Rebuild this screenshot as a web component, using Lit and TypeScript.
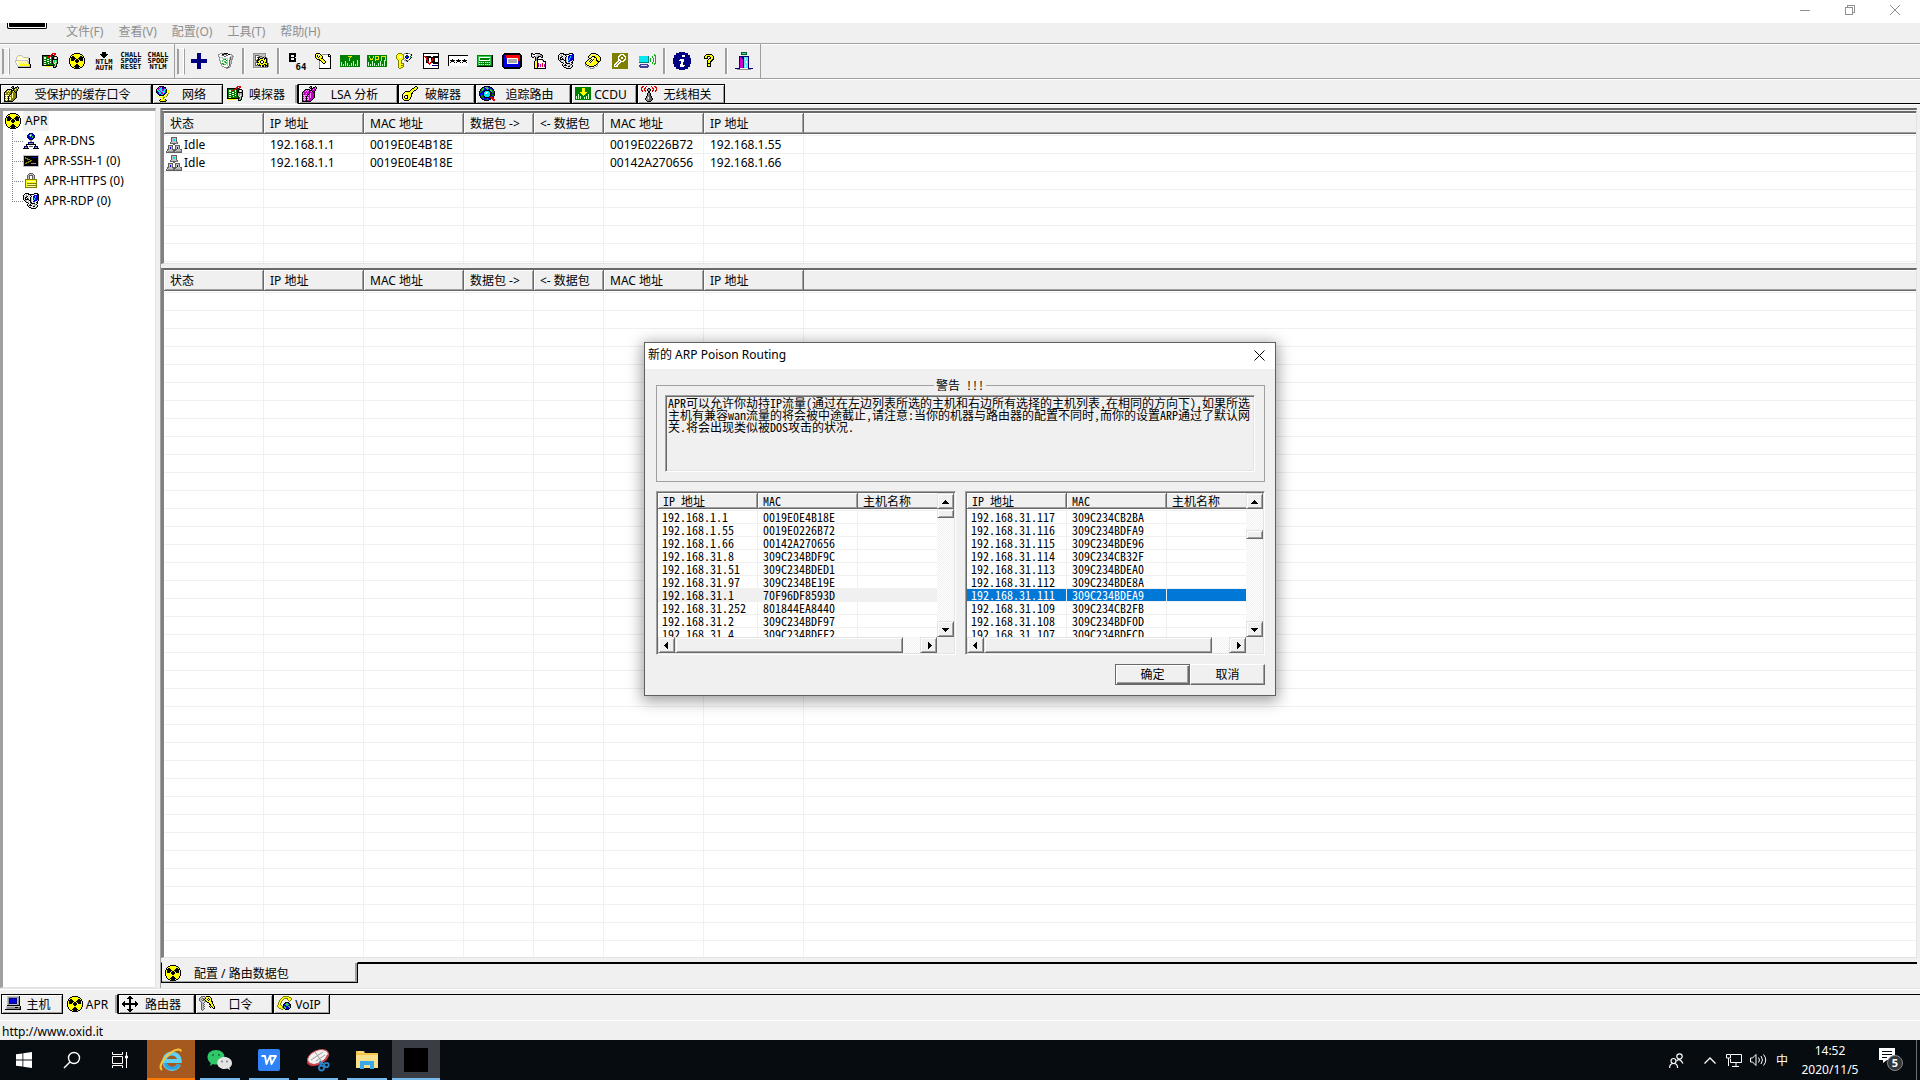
import { LitElement, html, css, svg, nothing } from "lit";
import { customElement, property } from "lit/decorators.js";
import { classMap } from "lit/directives/class-map.js";

/* ---------- icons ---------- */

const PALETTE: Record<string, string> = {
  k: "#000", w: "#fff", y: "#ffff00", Y: "#ffffa0", o: "#808000", g: "#008000", G: "#30d050", s: "#c0c0c0",
  d: "#606060", D: "#909090", b: "#0000e0", n: "#000080", c: "#00e8f0", r: "#e00000", m: "#c000c0", p: "#ff90ff",
};

/* Turns rows of palette letters into one-pixel-high runs. */
const pixels = (rows: string[]) => {
  const runs: unknown[] = [];
  rows.forEach((row, y) => {
    for (const m of row.matchAll(/([a-zA-Z])\1*/g)) {
      runs.push(svg`<rect x=${m.index} y=${y} width=${m[0].length} height="1" fill=${PALETTE[m[1]]}/>`);
    }
  });
  return runs;
};

const radiation = pixels([
  ".....kkkkkk.....",
  "...kkyyyyyykk...",
  "..kyyyyyyyyyyk..",
  ".kykkyyyyyykkyk.",
  ".kkkkkyyyykkkkk.",
  "kykkkkkyykkkkkyk",
  "kykkkkykkykkkkyk",
  "kykkkykkkkykkkyk",
  "kyyyyykkkkyyyyyk",
  "kyyyyyykkyyyyyyk",
  "kyyyyyyyyyyyyyyk",
  ".kyyyyykkyyyyyk.",
  ".kyyyykkkkyyyyk.",
  "..kyykkkkkkyyk..",
  "...kkykkkkykk...",
  ".....kkkkkk.....",
]);

const nic = pixels([
  "..........rrrr..",
  ".........rr.rr..",
  "kkkkkkkkrrkkr...",
  "kgggggrrrkgkkkk.",
  "kgwwgrrgwgkkswsk",
  "kgwwggggwgkkswsk",
  "kggggwwgggkkkkkk",
  "kgwwggggwgksGsGk",
  "kggggwwgggksGsGk",
  "kgwwggggwgksGwsk",
  "kgggggwgggkgwsgk",
  "kgwwgggggggkgsk.",
  "kkkkkkkkkkkkgsk.",
  ".y.yyyyyy..ksgk.",
  "...........kkk..",
  "................",
]);

const vaultRows = [
  "........kk...k..",
  ".......kDk.kkDk.",
  "........kkkooYk.",
  "...kkkkk.koYok..",
  "..koYoYkkkoook..",
  ".koYoYokoYkok...",
  "kooooookoookk...",
  "kYooYookYoook...",
  "koooookoYoook...",
  "kYYYYkYoYoook...",
  "koYokoooYoook...",
  "kYYYkYYoYoook...",
  "koYokoYooook....",
  "kYYYkYYoook.....",
  "koYokooook......",
  "kkkkkkkkk.......",
];
const vault = (main: string, light: string) => pixels(vaultRows.map((r) => r.replace(/o/g, main).replace(/Y/g, light)));

const bars = (label: unknown) => svg`
  <path d="M0 2h20v12H0z" fill="#008000"/>
  <path d="M1.500 13V9M3.500 13v-2M5.500 13V8M7.500 13v-3M9.500 13v-1M11.500 13v-3M13.500 13V8M15.500 13v-2M17.500 13V7" stroke="#c8ffc8"/>
  ${label}`;

const caption = (lines: string[], top: number) => svg`
  ${lines.map((t, i) => svg`<text x="10" y="${top + i * 6}" text-anchor="middle" class="tiny">${t}</text>`)}`;

const rdp = pixels([
  "..kkkk.....kkkk.",
  ".kwswkkkkkkswwbk",
  "kwsDwswkswwbbbbk",
  "kswdkwswkwbbcbbk",
  "kwkkwswkswbbcbbk",
  "ksk.kswkswbcbbbk",
  "kwkkkkwkswbcbbbk",
  ".kDswskkswcbbbsk",
  "..kswswkswbbswk.",
  "...kkswkkwsswkk.",
  ".....kwskkkkwsk.",
  "....kwskwswsDk..",
  "....kskkkwsDswk.",
  ".....kwswskkwsk.",
  "......kkswswsk..",
  "........kkkkk...",
]);

const ICONS: Record<string, { w?: number; art: unknown }> = {
  folder: { art: pixels([
    "................",
    "................",
    "...ssss.........",
    "..sYYYYs........",
    ".sYwYwYwssssss..",
    ".sYYYYYYYYYYYsk.",
    ".swwwwwwwwwwwsk.",
    "ssssssssssssswk.",
    "sYwYwYwYwYwYssk.",
    "swYYyYyYyYyYysk.",
    ".swYyYyYyYyYysk.",
    ".sYYYyYyYyYyYysk",
    "..swYyYyYyYyYysk",
    "..sssssssssssssk",
    "...kkkkkkkkkkkkk",
    "................",
  ]) },
  nic: { art: nic },
  apr: { art: radiation },
  ntlm: { w: 20, art: svg`<path d="M8-1h4v2h2v1h-1v1h-1v1h-1v1h-2v-1h-1v-1h-1v-1h-1v-1h2z" fill="#000"/>${caption(["NTLM", "AUTH"], 11)}` },
  reset: { w: 20, art: caption(["CHALL", "SPOOF", "RESET"], 4) },
  chntlm: { w: 20, art: caption(["CHALL", "SPOOF", "NTLM"], 4) },
  plus: { art: svg`<path d="M6 0h4v6h6v4h-6v6H6v-6H0V6h6z" fill="#000080"/>` },
  bin: { art: pixels([
    "..DDDDkkkk......",
    "DDwwkkdddwkkDD..",
    "DwwsddwwddwwwsD.",
    "DswwwwddwwwwssDD",
    ".DssswwwwwwsdsD.",
    ".DwwsssssswsdsD.",
    ".DwwwGGgwswsdDD.",
    ".DswGswwgswdsD..",
    "..DwGwGGwswdsD..",
    "..DwwwsgGswdsD..",
    "..DsgGwwGswdsD..",
    "...DsgGGwswdD...",
    "...DwwwwwswdD...",
    "....DDwwwwdsD...",
    "......DDDddD....",
    "........DD......",
  ]) },
  config: { art: pixels([
    "DDDDDDDDDDDDD...",
    "DsssssssssssDw..",
    "DsddddssssssDw..",
    "DsdwwsdddssDDw..",
    "DsdwdkkssdkskDw.",
    "DsdwwkykkkykkkDw",
    "DsdwdkkyyyykykDw",
    "DsddkkyykkyyykDw",
    "DssdkyykwwkyykDw",
    "DsddkkykwwkykkDw",
    "DsdwsyyykkyyyykD",
    "DsdwkykyyyykkykD",
    "DsddDkkkykkykkkD",
    "DssssssdykkskDkD",
    "DDDDDDDDDDDDDDDw",
    ".wwwwwwwwwwwwww.",
  ]) },
  b64: { w: 20, art: svg`<path d="M3 0h7v4H9v1h1v4H3zM5 2v2h3V2zM5 5v2h3V5z" fill="#000" fill-rule="evenodd"/><text x="15" y="17" text-anchor="middle" class="six">64</text>` },
  keydoc: { art: pixels([
    ".kkkk.wwwwwwww..",
    "kyYYyk.DDDDDDkk.",
    "kYk.yykwwwwwwkwk",
    "kyk.kyykwwwwwkkk",
    "kyykyyykwwwwwwwk",
    ".kyyyykkwwwwwwwk",
    "..kkkyyykwwwwwwk",
    "....kkyyykwwwwwk",
    "....Dwkyyykwwwwk",
    "....DwwkyykwwwwK",
    "....DwwwkkwwwwwK",
    "....Dwwwwwwwwwwk",
    "....Dwwwwwwwwwwk",
    "....Dwwwwwwwwwwk",
    "....Dwwwwwwwwwwk",
    "....kkkkkkkkkkkk",
  ].map((r) => r.replace(/K/g, "k"))) },
  tl: { w: 20, art: bars(svg`<path d="M8 3h4v1h-1v1h-1v3h-1V5h1V4H8z" fill="#e8e800"/>`) },
  vpn: { w: 20, art: bars(svg`<path d="M2 3h1v2h1v1h1V5h1V3h1v2H6v2H3V5H2zM8 3h4v4H9v1H8zM9 4v2h2V4zM14 3h5v5h-1V4h-3v4h-1z" fill="#e8e800" fill-rule="evenodd"/>`) },
  keyeye: { art: pixels([
    "..oooo..DDkkDD..",
    ".oyyyyoDwwwwwwDk",
    "oyyyyyyowwnbwwwk",
    "oyywwyyowngbbwgw",
    "oyywwyyownbbbwGk",
    "oyyyyyyoDwnnwwk.",
    ".oyyyyoDwDwwwk..",
    "..oyyo..DDkDD...",
    "..oyyo...wDk....",
    "..oyyo..........",
    "..oyyooo........",
    "..oyyyyo........",
    "..oyyooo........",
    "..oyyyyo........",
    "..oyyoo.........",
    "...oo...........",
  ]) },
  nc: { art: pixels([
    "kkkkkkkkkkkkkkkk",
    "kwwwwwwwwwwwwwwk",
    "kwwwwwwwwwwwwwwk",
    "krrkkkkkwwkkkkkk",
    "kwrrkkkkkkkkkkkk",
    "kwwrkkwwkrkkwwwk",
    "kwwrrkwwkrkkwwwk",
    "kwwkrkwwrrkkwwwk",
    "kwwkrrwwrkkkwwwk",
    "kwwkkrwrrkkkkkkk",
    "kwwwwrrrwwkkkkkk",
    "kwwwwwrwwwwwwwwk",
    "kwwwwwwwwnnnnnnk",
    "kwwwwwwwwwwwwwwk",
    "kwwwwwwwwwwwwwwk",
    "kkkkkkkkkkkkkkkk",
  ]) },
  stars: { w: 20, art: svg`<path d="M0 2h20v11H0z" fill="#fff"/><path d="M0 2h20v1H1v10H0z" fill="#000"/>${[2, 8, 14].map((x) => svg`<path transform="translate(${x} 6)" d="M2 0h1v1h2v1H4v1h1v1H4V3H1v1H0V3h1V2H0V1h2z" fill="#000"/>`)}` },
  calc: { art: pixels([
    "................",
    "................",
    "gggggggggggggggk",
    "gGGGGGGGGGGGGGgk",
    "gGwwwwwwwwwwwGgk",
    "gGwggggggggggGgk",
    "gGwgggggggggwGgk",
    "gGwwwwwwwwwwwGgk",
    "gGgggggggggggGgk",
    "gGwGwGwgwGwGwGgk",
    "gGgggggggggggGgk",
    "gGwGwGwgwGwGwGgk",
    "gggggggggggggggk",
    "kkkkkkkkkkkkkkkk",
    "................",
    "................",
  ]) },
  rsa: { w: 20, art: svg`<path d="M2 0h16v1h1v1h1v12h-1v1h-1v1H2v-1H1v-1H0V2h1V1h1z" fill="#000"/><path d="M2 2h16v12H2z" fill="#0000e0"/><path d="M4 2h14v6h-2V5H4z" fill="#f00"/><path d="M5 5h11v6H5z" fill="#fff"/><path d="M6 6h9v4H6z" fill="#a8a8a8"/>` },
  hammer: { art: pixels([
    "kk..kkkkk.......",
    "kskkwwssskk.....",
    "kwwwwsssssdk....",
    "ksskssskkksk....",
    ".kk.kskk..kk....",
    "....kDk.........",
    "....kDkkkkkk....",
    "....kDkwwwwDk...",
    "...kyykwwwwwkkk.",
    "...kyykwwwwwwwk.",
    "...kyykmwwwrwwk.",
    "...kyykmwmwrwmk.",
    "...kyykmwmwrwmk.",
    "...kyykmwmwrwmk.",
    "...kyykwwwwwwwk.",
    "...kkkkkkkkkkkk.",
  ]) },
  rdp: { art: rdp },
  phone: { art: pixels([
    "......kkkkk.....",
    ".....kyYYYykk...",
    "....kyYyyyyYyk..",
    "...kyYykkkyyYyk.",
    "...kyykwykkyyyyk",
    "....kkyYwyykyyyk",
    "...kyYkYkyykyyyk",
    "..kyYkYkYyykkyyk",
    ".kyYkYkYyyyykkk.",
    "kyYYYkYyyyyyyk..",
    "kyyyyYyyyyyyk...",
    "DkyyyyyyyyykD...",
    "DwkkyyyyykkwD...",
    ".DswkkkkkwsD....",
    "...DsswwsD......",
    ".....DDDD.......",
  ]) },
  keyolive: { art: pixels([
    "oooooooooooooooo",
    "oooooooowwwwoooo",
    "ooooooowwoowwooo",
    "oooooowwoooowwoo",
    "oooooowoowwoowoo",
    "oooooowoowwoowoo",
    "oooooowwoooowwoo",
    "oooooowwwoowwooo",
    "ooooowwowwwwoooo",
    "oooowwowwooooooo",
    "ooowwowwoooooooo",
    "oowwowwooooooooo",
    "oowowwoooooooooo",
    "oowwwwoooooooooo",
    "oooooooooooooooo",
    "oooooooooooooooo",
  ]) },
  remote: { art: svg`<path d="M0 3h9v7H0z" fill="#00e8f0"/><path d="M0 9h9v1H0zM9 3h1v7H9z" fill="#008080"/><path d="M1 11h8v1h1v2H9v1H1v-1H0v-2h1z" fill="#404098"/><path d="M2 12h6v1H2z" fill="#dcdcf8"/><path d="M11 5h1v4h-1zM13 3h1v2h1v4h-1v2h-1V9h1V5h-1zM15 1h1v1h1v9h-1v1h-1v-2h1V3h-1z" fill="#10b010"/>` },
  info: { w: 18, art: svg`<path d="M6-1h6v1h3v2h2v3h1v6h-1v3h-2v2h-3v1H6v-1H3v-2H1v-3H0V5h1V2h2V0h3z" fill="#000080"/><path d="M9 2h3v2H9zM7 6h4v3h-1v3h2v1h-1v1H7v-3h1V8H6V7h1z" fill="#fff"/>` },
  help: { art: pixels([
    "................",
    ".....kkkkkk.....",
    "....kyyyyyyk....",
    "...kyykkkyyyk...",
    "...kyyk..kyyk...",
    "...kkkk.kkyyk...",
    ".......kyyykk...",
    "......kyyykk....",
    "......kyykk.....",
    "......kyyk......",
    "......kkkk......",
    "......kyyk......",
    "......kyyk......",
    "......kkkk......",
    "................",
    "................",
  ]) },
  exit: { w: 18, art: svg`<path d="M6-1h6v3H6z" fill="#006030"/><path d="M7 0h4v1H7z" fill="#40e080"/><path d="M4 3h10v12H4z" fill="#000080"/><path d="M5 4l3 2v9H5z" fill="#d000d0"/><path d="M9 4h4v11H9z" fill="#60e8f0"/><path d="M10 5h1v2h-1zM11 8h1v2h-1zM10 12h1v2h-1z" fill="#fff"/><path d="M0 15h5v1H0zM13 15h5v1h-5z" fill="#000080"/><path d="M2 16h14v1H2z" fill="#909090"/>` },
  cacheTab: { art: vault("o", "Y") },
  lsaTab: { art: vault("m", "p") },
  netTab: { art: pixels([
    "...kkkkk........",
    "..kcmcbbkk......",
    ".kmmccbbmk.y....",
    "kcmcccmmccky....",
    "kccmccmmcmkyy...",
    "kbccmccccmk.y...",
    "kbbccmmccbk.y...",
    ".kbccmmcbk.yo...",
    "..kbbccbk.yo....",
    "...kkkkk.yyo....",
    "..yy..yyyyo.....",
    "....yyyoo.......",
    "......yo........",
    "....kyyyyk......",
    "...kyyyyyok.....",
    "....kkkkkk......",
  ]) },
  crackTab: { art: pixels([
    ".............kk.",
    "............kyyk",
    "..........kkyyyk",
    ".........kyyyYk.",
    "........kyyYkk..",
    "...kkkkkyyYk....",
    "..kyyyyyyyk.....",
    ".kyYYyyyykk.....",
    "kyYYyyyyyk......",
    "kyykkkyyyk......",
    "kyk.wkyyyk......",
    "kyk.wkyyk.......",
    "kyykkkyyk.......",
    ".kyyyyyk........",
    "..kkkkk.........",
    "................",
  ]) },
  traceTab: { art: pixels([
    ".....kkkkkk.....",
    "...kkbGGGbbkk...",
    "..kgGbbGGGbbbk..",
    ".kgGGbbbGbbGgbk.",
    ".kgGbnkkkknGGgk.",
    "kggbnkccccknGggk",
    "kgbbkccwwccknggk",
    "kbbbkcwwccckbbbk",
    "kbgbkcccccckbgbk",
    "kbggkccccccknggk",
    ".kggbkccccknrbk.",
    ".kbggnkkkknrrrk.",
    "..kbgbbbgbbkrrr.",
    "...kkbbggbkk.rrr",
    ".....kkkkk....rr",
    "................",
  ]) },
  ccduTab: { art: svg`<path d="M0 1h16v13H0z" fill="#008000"/><path d="M1.500 13v-3M3.500 13v-5M5.500 13v-3M9.500 13v-2M11.500 13v-3M13.500 13V8" stroke="#c8ffc8"/><path d="M7 2h3v4h2v1h-1v1h-1v1H9v1H8V9H7V8H6V7H5V6h2z" fill="#ff0"/>` },
  wifiTab: { art: pixels([
    ".rr..r....r..rr.",
    "rr..r......r..rr",
    "r..rr..kk..rr..r",
    "r..r..kDDk..r..r",
    "rr.rr.kDDk.rr.rr",
    ".r..r..kk..r..r.",
    ".......kk.......",
    "......kDDk......",
    "......kDdk......",
    "......kDdk......",
    ".....kDDddk.....",
    ".....kDwddk.....",
    "....kDDwdddk....",
    "....kDDDdddk....",
    ".....kDDddk.....",
    "......kkkk......",
  ]) },
  dns: { art: pixels([
    "......nnnn......",
    ".....nbGGbn.....",
    "....nbGwGbbn....",
    "....nbbGbGbn....",
    "....nnbbbGnn....",
    ".....nnbbnn.....",
    "......nnnn......",
    ".......DD.......",
    ".......DD.......",
    ".....nnnnnn.....",
    ".....nDDDDn.....",
    "...kkkkkkkkkk...",
    "...k........k...",
    ".nnnn.dddd.nnnn.",
    ".nDDn......nDDn.",
    "kkkkkk....kkkkkk",
  ]) },
  ssh: { art: pixels([
    "................",
    "................",
    "ssssssssssssssss",
    "skkkkkkkkkkkkkks",
    "skokkkkknnnnnnks",
    "skoookkkkkkkkkks",
    "skkkoookkkkkkkks",
    "skkkkkkookkkkkks",
    "skkkkoookkkkkkks",
    "skkoookkkkkkkkks",
    "skookkkkDDDDDkks",
    "skkkkkkkkkkkkkks",
    "skkkkkkkkkkkkkks",
    "ssssssssssssssss",
    "................",
    "................",
  ]) },
  lock: { art: pixels([
    "......dddd......",
    ".....dssssd.....",
    "....dsddddsd....",
    "....dsd..dsd....",
    "....dsd..dsd....",
    "....dsd..dsd....",
    "..oooooooooooo..",
    "..oyyyyyyyyyyo..",
    "..oyYYYYYYYYyo..",
    "..oyyyyyyyyyyo..",
    "..oyoooooooooo..",
    "..oyYYYYYYYYyo..",
    "..oyoooooooooo..",
    "..oyYYYYYYYYyo..",
    "..oooooooooooo..",
    "................",
  ]) },
  cluster: { art: pixels([
    ".....dddddd.....",
    ".....dssssd.....",
    ".....dsccsd.....",
    ".....dsccsd.....",
    ".....dssssd.....",
    "....dsssssDd....",
    "....ddddddDd....",
    ".......dd.......",
    "..ddddd..ddddd..",
    "..dsssd..dsssd..",
    "..dsbsd..dsbsd..",
    "..dsbsd..dsbsd..",
    ".ddsssdddd sssdd".replace(" ", "d"),
    ".dsssssdddsssssd",
    "dsDDDDDddsDDDDDd",
    "dddddddddddddddd",
  ]) },
  pc: { art: pixels([
    "..ssssssssssssk.",
    "..sDDDDDDDDDDDk.",
    "..sDnnnnnnnnsDk.",
    "..sDnbbbbbbnsDk.",
    "..sDnbbbbbbnsDk.",
    "..sDnbbbbbbnsDk.",
    "..sDnbbbbbbnsDk.",
    "..sDnnnnnnnnsDk.",
    "..sDssssssssDDk.",
    "..kkkkkkkkkkkkk.",
    ".ssssssssssssssk",
    ".sDDGDDDDDkkkDdk",
    ".sDDDDDDDDDDDDdk",
    "kkkkkkkkkkkkkkkk",
    "................",
    "................",
  ]) },
  move: { art: svg`<path d="M7 0h2v1h1v1h1v1H9v4h4V5h1v1h1v1h1v2h-1v1h-1v1h-1V9H9v4h2v1h-1v1H9v1H7v-1H6v-1H5v-1h2V9H3v2H2v-1H1V9H0V7h1V6h1V5h1v2h4V3H5V2h1V1h1z" fill="#000"/>` },
  keys: { art: pixels([
    "..dddd.kkkk.....",
    ".dsswsdyYyyk....",
    "dssddskyykyyk...",
    "dsd.dkyyk.kyk...",
    "dssddskyykyyk...",
    ".dsswsdkyyyykk..",
    "..dssd..kkyyyk..",
    "..dsd.....kyyk..",
    "..dssd....kkyyk.",
    "..dsd......kyyk.",
    "..dssd....kykyyk",
    "..dsd......k.kyk",
    "..dssd........kk",
    "..dsd...........",
    "...d............",
    "................",
  ]) },
  voip: { art: pixels([
    "......oooooo....",
    ".....oyyyyyyoo..",
    "....oyyooooyyyo.",
    "...oyyo...oyYyo.",
    "..oyyo.....oyo..",
    "..oyo.......o...",
    ".oyyo...kkkk....",
    ".oyo...kbGGbk...",
    ".oyo..kbGGGGbk..",
    "oyyyo.kbbGGbbk..",
    "oyYyyokGbbbGGk..",
    ".oyyyokGGbbbGk..",
    "..ooyyokGbbbk...",
    "....oo..kkkk....",
    "................",
    "................",
  ]) },
};

const icon = (name: string) => {
  const { w = 16, art } = ICONS[name];
  return html`<svg class="ico" width=${w} height="16" viewBox="0 0 ${w} 16" aria-hidden="true">${art}</svg>`;
};

/* ---------- shared styles ---------- */

const base = css`
  * { box-sizing: border-box; }
  button, input, textarea, table { font: inherit; color: inherit; }
  button { border: 0; padding: 0; margin: 0; background: none; }
  .ico { display: block; flex: none; overflow: visible; shape-rendering: crispEdges; }
  .tiny { font: bold 7px "DejaVu Sans Mono", "Liberation Mono", monospace; }
  .six { font: bold 9px "DejaVu Sans Mono", "Liberation Mono", monospace; }
`;

/* ---------- report list ---------- */

interface Column { label: string; width: number; }
interface Row { cells: string[]; icon?: string; state?: string; }

@customElement("report-list")
class ReportList extends LitElement {
  @property({ attribute: false }) columns: Column[] = [];
  @property({ attribute: false }) rows: Row[] = [];
  @property({ type: Number }) blank = 0;
  @property({ type: Boolean, reflect: true }) compact = false;

  static styles = [base, css`
    :host { display: block; overflow: hidden; background: #fff; min-height: 0; min-width: 0; }
    table { width: 100%; table-layout: fixed; border-collapse: separate; border-spacing: 0; }
    th, td { padding: 0 0 0 6px; text-align: left; font-weight: normal; white-space: nowrap; }
    th {
      height: 22px; line-height: 16px; background: #f0f0f0; border-bottom: 1px solid #fff;
      box-shadow: inset -1px -1px #696969, inset 1px 1px #fff, inset -2px -2px #a0a0a0;
    }
    th:last-child { box-shadow: inset 0 -1px #696969, inset 0 1px #fff, inset 0 -2px #a0a0a0; }
    td { height: 18px; line-height: 16px; border-top: 1px solid #f0f0f0; border-right: 1px solid #f0f0f0; }
    td:last-child { border-right: 0; }
    .cell { display: flex; align-items: center; gap: 2px; }
    .lead { padding-left: 2px; }
    :host([compact]) th { height: 17px; line-height: 16px; }
    :host([compact]) th, :host([compact]) td { padding-left: 5px; }
    :host([compact]) td:first-child { padding-left: 4px; }
    :host([compact]) td { height: 13px; line-height: 12px; }
    .hot td { background: #f0f0f0; }
    .selected td { background: #0078d7; color: #fff; }
  `];

  render() {
    const n = this.columns.length;
    return html`<table>
      <colgroup>${this.columns.map((c) => html`<col style="width:${c.width}px">`)}${this.compact ? nothing : html`<col>`}</colgroup>
      <thead><tr>${this.columns.map((c) => html`<th scope="col">${c.label}</th>`)}${this.compact ? nothing : html`<th></th>`}</tr></thead>
      <tbody>
        ${this.rows.map((r) => html`<tr class=${r.state ?? ""}>
          ${this.columns.map((_, i) => i === 0 && r.icon
            ? html`<td class="lead"><div class="cell">${icon(r.icon)}<span>${r.cells[0]}</span></div></td>`
            : html`<td>${r.cells[i] ?? ""}</td>`)}
          ${this.compact ? nothing : html`<td></td>`}
        </tr>`)}
        ${Array.from({ length: this.blank }, () => html`<tr>${Array.from({ length: n + 1 }, () => html`<td></td>`)}</tr>`)}
      </tbody>
    </table>`;
  }
}

/* ---------- host picker used in the dialog ---------- */

const arrow = (d: string) => html`<svg class="ico" width="8" height="7" viewBox="0 0 8 7" aria-hidden="true"><path d=${d} fill="#000"/></svg>`;

@customElement("host-picker")
class HostPicker extends LitElement {
  @property({ attribute: false }) rows: Row[] = [];
  @property({ type: Number }) offset = 0;

  static styles = [base, css`
    :host {
      display: grid; grid-template-columns: 1fr 17px; grid-template-rows: 144px 16px; background: #f0f0f0;
      border: 1px solid; border-color: #a0a0a0 #fff #fff #a0a0a0; box-shadow: inset 1px 1px #696969, inset -1px -1px #e3e3e3;
      padding: 1px; min-width: 0;
    }
    .bar { display: flex; background: repeating-conic-gradient(#fff 0 25%, #f0f0f0 0 50%) 0 0 / 2px 2px; }
    .vertical { flex-direction: column; }
    .cap, .thumb {
      background: #f0f0f0; border: 1px solid; border-color: #e3e3e3 #696969 #696969 #e3e3e3;
      box-shadow: inset 1px 1px #fff, inset -1px -1px #a0a0a0;
    }
    .cap { width: 17px; height: 16px; flex: none; display: flex; align-items: center; justify-content: center; }
    .track { flex: 1; }
    .vertical .thumb { height: 9px; }
    .horizontal .thumb { height: 16px; width: 93%; }
  `];

  render() {
    const cols = [{ label: "IP 地址", width: 100 }, { label: "MAC", width: 100 }, { label: "主机名称", width: 79 }];
    return html`
      <report-list compact .columns=${cols} .rows=${this.rows}></report-list>
      <div class="bar vertical">
        <button class="cap" aria-label="向上">${arrow("M3 2h1v1h1v1h1v1h1v1H0V5h1V4h1V3h1z")}</button>
        <div class="track"><div class="thumb" style="margin-top:${this.offset}px"></div></div>
        <button class="cap" aria-label="向下">${arrow("M0 2h7v1H6v1H5v1H4v1H3V5H2V4H1V3H0z")}</button>
      </div>
      <div class="bar horizontal">
        <button class="cap" aria-label="向左">${arrow("M5 0v7H4V6H3V5H2V4H1V3h1V2h1V1h1V0z")}</button>
        <div class="track"><div class="thumb"></div></div>
        <button class="cap" aria-label="向右">${arrow("M3 0v7h1V6h1V5h1V4h1V3H6V2H5V1H4V0z")}</button>
      </div>`;
  }
}

/* ---------- dialog ---------- */

const leftHosts: Row[] = [
  ["192.168.1.1", "0019E0E4B18E"], ["192.168.1.55", "0019E0226B72"], ["192.168.1.66", "00142A270656"],
  ["192.168.31.8", "309C234BDF9C"], ["192.168.31.51", "309C234BDED1"], ["192.168.31.97", "309C234BE19E"],
  ["192.168.31.1", "70F96DF8593D"], ["192.168.31.252", "801844EA8440"], ["192.168.31.2", "309C234BDF97"],
  ["192.168.31.4", "309C234BDEF2"],
].map((cells, i) => ({ cells, state: i === 6 ? "hot" : "" }));

const rightHosts: Row[] = [
  ["192.168.31.117", "309C234CB2BA"], ["192.168.31.116", "309C234BDFA9"], ["192.168.31.115", "309C234BDE96"],
  ["192.168.31.114", "309C234CB32F"], ["192.168.31.113", "309C234BDEA0"], ["192.168.31.112", "309C234BDE8A"],
  ["192.168.31.111", "309C234BDEA9"], ["192.168.31.109", "309C234CB2FB"], ["192.168.31.108", "309C234BDF0D"],
  ["192.168.31.107", "309C234BDECD"],
].map((cells, i) => ({ cells, state: i === 6 ? "selected" : "" }));

const warning = `APR可以允许你劫持IP流量(通过在左边列表所选的主机和右边所有选择的主机列表,在相同的方向下),如果所选
主机有兼容wan流量的将会被中途截止,请注意:当你的机器与路由器的配置不同时,而你的设置ARP通过了默认网
关.将会出现类似被DOS攻击的状况.`;

@customElement("poison-dialog")
class PoisonDialog extends LitElement {
  static styles = [base, css`
    :host {
      display: block; width: 632px; background: #f0f0f0; border: 1px solid #606060; color: #000;
      box-shadow: 0 3px 14px 2px rgba(0, 0, 0, .38);
      font: 12px/12px "Noto Sans Mono CJK SC", "Noto Sans CJK SC", monospace;
    }
    header {
      height: 26px; background: #fff; display: flex; align-items: center; justify-content: space-between;
      padding: 0 10px 2px 3px; font: 12px/16px "Noto Sans", "Noto Sans CJK SC", sans-serif;
    }
    h2 { font: inherit; margin: 0; }
    .body { padding: 10px 10px 10px 11px; display: flex; flex-direction: column; gap: 9px; }
    fieldset { margin: 0; padding: 4px 9px 10px 8px; border: 1px solid #a0a0a0; min-width: 0; height: 103px; }
    legend { margin: 0 auto; padding: 0 2px; background: #f0f0f0; }
    textarea {
      display: block; width: 100%; height: 77px; resize: none; outline: 0; background: #f0f0f0; padding: 1px 0 0 2px; white-space: pre; overflow: hidden;
      border: 1px solid; border-color: #a0a0a0 #fff #fff #a0a0a0; box-shadow: inset 1px 1px #696969, inset -1px -1px #e3e3e3;
    }
    .lists { display: grid; grid-template-columns: 1fr 1fr; gap: 9px; }
    .actions { display: flex; justify-content: flex-end; }
    .push {
      width: 75px; height: 21px; padding-bottom: 2px; background: #f0f0f0;
      border: 1px solid; border-color: #fff #696969 #696969 #fff; box-shadow: inset -1px -1px #a0a0a0;
    }
    .primary { border-color: #696969; box-shadow: inset 1px 1px #fff, inset -1px -1px #696969, inset -2px -2px #a0a0a0; }
    .smooth { shape-rendering: auto; }
  `];

  render() {
    return html`
      <header>
        <h2>新的 ARP Poison Routing</h2>
        <button aria-label="关闭"><svg class="ico smooth" width="11" height="11" viewBox="0 0 11 11" aria-hidden="true"><path d="M.5.500l10 10M10.500.500l-10 10" stroke="#000" fill="none"/></svg></button>
      </header>
      <div class="body">
        <fieldset>
          <legend>警告 !!!</legend>
          <textarea readonly aria-label="警告" .value=${warning}></textarea>
        </fieldset>
        <div class="lists">
          <host-picker .rows=${leftHosts}></host-picker>
          <host-picker .rows=${rightHosts} .offset=${21}></host-picker>
        </div>
        <div class="actions">
          <button class="push primary">确定</button>
          <button class="push">取消</button>
        </div>
      </div>`;
  }
}

/* ---------- task bar ---------- */

@customElement("task-bar")
class TaskBar extends LitElement {
  static styles = [base, css`
    :host { display: flex; height: 40px; flex: none; background: #070c11; color: #fff; font: 12px/19px "Noto Sans", "Noto Sans CJK SC", sans-serif; justify-content: space-between; }
    .apps, .tray { display: flex; align-items: stretch; }
    .app { width: 48px; display: flex; align-items: center; justify-content: center; position: relative; margin-right: 1px; }
    .plain { margin-right: 0; }
    .apps svg, .tray svg { display: block; }
    .running::after { content: ""; position: absolute; left: 4px; right: 4px; bottom: 0; height: 2px; background: #76b9ed; }
    .alert { background: #a6591f; margin-left: 3px; }
    .running.alert::after { left: 0; right: 0; background: #ff7a00; }
    .current { background: #3a3e44; }
    .running.current::after { left: 0; right: 0; }
    .black { width: 24px; height: 24px; background: #000; }
    .tray { align-items: center; }
    .tray button { display: flex; justify-content: center; align-items: center; height: 40px; width: 24px; }
    .tray .people { width: 44px; }
    .tray .clock { width: 72px; display: block; line-height: 19px; }
    .tray .notes { width: 50px; }
    .count { font: bold 11px "Noto Sans", sans-serif; }
    .edge { width: 4px; height: 40px; border-left: 1px solid #6b7075; }
  `];

  render() {
    return html`
      <div class="apps">
        <button class="app plain" aria-label="开始"><svg width="16" height="16" viewBox="0 0 16 16"><path d="M0 2.300L6.500 1.400V7.600H0zM7.300 1.300L16 0v7.600H7.300zM0 8.400h6.500v6.200L0 13.700zM7.300 8.400H16V16l-8.700-1.300z" fill="#fff"/></svg></button>
        <button class="app plain" aria-label="搜索"><svg width="18" height="18" viewBox="0 0 18 18" fill="none" stroke="#fff" stroke-width="1.400"><circle cx="11" cy="7" r="5.500"/><path d="M7 11l-6 6"/></svg></button>
        <button class="app plain" aria-label="任务视图"><svg width="16" height="16" viewBox="0 0 16 16" fill="none" stroke="#fff"><path d="M.5 0v2.500h10V0M.5 16v-2.500h10V16M.5 4.500h10v7H.5zM14.500 0v16M13.500 4h2v2h-2z"/></svg></button>
        <button class="app running alert" aria-label="Internet Explorer"><svg width="24" height="24" viewBox="0 0 24 24" fill="none"><path d="M20 16.500A7.700 7.700 0 1 1 20.700 13H7" stroke="#5ed2f7" stroke-width="4"/><path d="M20 16.500A7.700 7.700 0 0 1 6 15" stroke="#2ba4e0" stroke-width="3"/><path d="M3 22C-1 19 4 10 12 4.500 17 1 22 .5 22 3.500" stroke="#f8c838" stroke-width="2"/></svg></button>
        <button class="app running" aria-label="微信"><svg width="26" height="22" viewBox="0 0 26 22"><path d="M9 1c5 0 8.500 3 8.500 7S14 15.500 9 15.500c-1 0-2 0-3-.5l-3 2 .7-3C1.500 12.500.5 10.500.5 8.300.5 4 4 1 9 1z" fill="#2fc869"/><path d="M17.500 8c4 0 7.500 2.500 7.500 6 0 2-1 3.500-2.500 4.500l.5 2.500-2.500-1.500c-1 .3-2 .5-3 .5-4 0-7.300-2.500-7.300-6s3.300-6 7.300-6z" fill="#e4e4e4"/><g fill="#176a38"><circle cx="6" cy="6" r="1"/><circle cx="12" cy="6" r="1"/></g><g fill="#777"><circle cx="15" cy="12.500" r=".9"/><circle cx="20" cy="12.500" r=".9"/></g></svg></button>
        <button class="app running" aria-label="WPS"><svg width="22" height="22" viewBox="0 0 22 22"><rect width="22" height="22" rx="2" fill="#2f83f7"/><path d="M3.500 7H7l1.500 8 3.500-8 1.500 8L18 7h-6" fill="none" stroke="#fff" stroke-width="1.800" stroke-linejoin="round"/></svg></button>
        <button class="app running" aria-label="截图工具"><svg width="24" height="24" viewBox="0 0 24 24"><ellipse cx="12" cy="9" rx="11" ry="6.500" transform="rotate(-24 12 9)" fill="#f4f0f0"/><path d="M1.500 14C4 19 13 18 20 11l2-4" stroke="#c03038" stroke-width="2" fill="none"/><ellipse cx="12" cy="9" rx="11" ry="6.500" transform="rotate(-24 12 9)" fill="none" stroke="#c85058"/><path d="M5 12l12-8M9 4l7 10M10 13l9-6" stroke="#9a9a9a" fill="none"/><g fill="none" stroke="#2a84c8" stroke-width="1.800"><circle cx="15.500" cy="20" r="2.500"/><circle cx="20.500" cy="17" r="2.200"/><path d="M15 17l-1-4M18 16l-5-2"/></g></svg></button>
        <button class="app running" aria-label="文件资源管理器"><svg width="22" height="20" viewBox="0 0 22 20"><path d="M0 1h8l1 2h13v15H0z" fill="#f5c64a"/><path d="M0 5h22v13H0z" fill="#fbe08c"/><path d="M2 2h5" stroke="#fff3c0"/><path d="M4 19v-8h14v8h-4v-4H8v4z" fill="#38a9e8"/></svg></button>
        <button class="app running current" aria-label="Cain"><span class="black"></span></button>
      </div>
      <div class="tray">
        <button class="people" aria-label="人脉"><svg width="15" height="15" viewBox="0 0 15 15" fill="none" stroke="#fff" stroke-width="1.200"><circle cx="10.500" cy="3.500" r="2.700"/><circle cx="4.500" cy="8" r="2.500"/><path d="M.6 15q0-4.500 4-4.500t4 4.500M7.500 8q3-3.500 6.500 2.500"/></svg></button>
        <button aria-label="显示隐藏的图标"><svg width="12" height="7" viewBox="0 0 12 7" fill="none" stroke="#fff" stroke-width="1.300"><path d="M.5 6.500L6 1l5.500 5.500"/></svg></button>
        <button aria-label="网络"><svg width="16" height="14" viewBox="0 0 16 14" fill="none" stroke="#fff"><path d="M5 1.500h10.500v8H4.500V6M10 10v3M6 13.500h7M.5 1.500h4V5h-4zM2.500 5v8"/></svg></button>
        <button aria-label="音量"><svg width="17" height="14" viewBox="0 0 17 14" fill="none" stroke="#fff"><path d="M.5 5h2L6 1.500v11L2.500 9h-2zM8.500 4.500q2 2.500 0 5M11 3q3 4 0 8M13.500 1.500q4.500 5.500 0 11"/></svg></button>
        <button aria-label="输入法">中</button>
        <button class="clock"><time datetime="2020-11-05T14:52">14:52<br>2020/11/5</time></button>
        <button class="notes" aria-label="通知"><svg width="26" height="26" viewBox="0 0 26 26"><path d="M1 1h16v12H9l-4 3v-3H1z" fill="#fff"/><path d="M4 4.500h10M4 7.500h10M4 10.500h5" stroke="#070c11"/><circle cx="17" cy="16" r="7.500" fill="#333739" stroke="#85898c"/><text class="count" x="17" y="20" text-anchor="middle" fill="#fff">5</text></svg></button>
        <span class="edge"></span>
      </div>`;
  }
}

/* ---------- main window ---------- */

const toolsA = [["folder", "打开"], ["nic", "启动嗅探器"], ["apr", "启动 APR"], ["ntlm", "NTLM"], ["reset", "CHALL"], ["chntlm", "SPOOF"]];
const toolsB = [
  ["plus", "添加"], ["bin", "删除"], [], ["config", "配置"], [], ["b64", "Base64"], ["keydoc", "口令"], ["tl", "TL"], ["vpn", "VPN"],
  ["keyeye", "查看"], ["nc", "NC"], ["stars", "星号"], ["calc", "计算"], ["rsa", "RSA"], ["hammer", "工具"], ["rdp", "RDP"], ["phone", "拨号"],
  ["keyolive", "密钥"], ["remote", "无线"], [], ["info", "关于"], ["help", "帮助"], [], ["exit", "退出"],
];

interface Tab { label: string; icon: string; width: number; }
const topTabs: Tab[] = [
  { label: "受保护的缓存口令", icon: "cacheTab", width: 152 }, { label: "网络", icon: "netTab", width: 71 },
  { label: "嗅探器", icon: "nic", width: 75 }, { label: "LSA 分析", icon: "lsaTab", width: 100 },
  { label: "破解器", icon: "crackTab", width: 77 }, { label: "追踪路由", icon: "traceTab", width: 96 },
  { label: "CCDU", icon: "ccduTab", width: 66 }, { label: "无线相关", icon: "wifiTab", width: 88 },
];
const bottomTabs: Tab[] = [
  { label: "主机", icon: "pc", width: 62 }, { label: "APR", icon: "apr", width: 55 }, { label: "路由器", icon: "move", width: 77 },
  { label: "口令", icon: "keys", width: 78 }, { label: "VoIP", icon: "voip", width: 57 },
];
const tree = [["dns", "APR-DNS"], ["ssh", "APR-SSH-1 (0)"], ["lock", "APR-HTTPS (0)"], ["rdp", "APR-RDP (0)"]];
const columns: Column[] = [
  { label: "状态", width: 100 }, { label: "IP 地址", width: 100 }, { label: "MAC 地址", width: 100 }, { label: "数据包 ->", width: 70 },
  { label: "<- 数据包", width: 70 }, { label: "MAC 地址", width: 100 }, { label: "IP 地址", width: 100 },
];
const routes: Row[] = [
  { icon: "cluster", cells: ["Idle", "192.168.1.1", "0019E0E4B18E", "", "", "0019E0226B72", "192.168.1.55"] },
  { icon: "cluster", cells: ["Idle", "192.168.1.1", "0019E0E4B18E", "", "", "00142A270656", "192.168.1.66"] },
];

@customElement("app-root")
class AppRoot extends LitElement {
  static styles = [base, css`
    :host { display: flex; flex-direction: column; height: 100vh; overflow: hidden; background: #f0f0f0; color: #000; font: 12px/16px "Noto Sans", "Noto Sans CJK SC", sans-serif; }
    .window { flex: 1; min-height: 0; display: flex; flex-direction: column; position: relative; }
    .title { height: 23px; flex: none; background: #fff; display: flex; justify-content: flex-end; gap: 35px; padding: 4px 20px 0 0; }
    .title button { height: 12px; }
    .smooth { shape-rendering: auto; }
    .menu { height: 20px; flex: none; display: flex; gap: 15px; padding-left: 7px; color: #8f8f8f; align-items: flex-start; }
    .badge { width: 40px; height: 6px; background: #000; border: 1px solid #000; border-top: 0; box-shadow: inset 1px -1px #fff, inset -1px 0 #fff; border-radius: 0 0 2px 2px; margin-right: 4px; }
    .menu button { height: 18px; }
    .tools { height: 37px; flex: none; display: flex; border-top: 1px solid #a0a0a0; border-bottom: 1px solid #fff; box-shadow: inset 0 1px #fff, inset 0 -1px #a0a0a0; }
    .group { display: flex; align-items: center; padding: 0 3px 1px 9px; border-right: 1px solid #a0a0a0; position: relative; }
    .group::before { content: ""; position: absolute; left: 2px; top: 4px; bottom: 4px; width: 6px; border: 1px solid; border-color: #fff #a0a0a0; box-shadow: inset -1px 0 #fff, inset 1px 0 #a0a0a0; }
    .group + .group { padding-left: 10px; }
    .tool { width: 27px; height: 28px; display: flex; align-items: center; justify-content: center; }
    .sep { width: 8px; height: 26px; display: flex; justify-content: center; }
    .sep::before { content: ""; width: 2px; background: #a0a0a0; border-right: 1px solid #fff; }
    .tabs { display: flex; flex: none; }
    .tab { height: 20px; display: flex; align-items: center; padding: 0 6px 0 3px; border: 1px solid #000; box-shadow: inset 1px 1px #fff, inset -1px -1px #a0a0a0; }
    .name { flex: 1; text-align: center; white-space: nowrap; padding-top: 2px; }
    .top { padding-top: 4px; border-bottom: 1px solid #fff; }
    .rest { flex: 1; }
    .top .rest { border-bottom: 1px solid #000; }
    .top .on { border-color: transparent #000 transparent transparent; box-shadow: inset -2px 0 #a0a0a0; }
    .main { flex: 1; min-height: 0; display: grid; grid-template-columns: 156px minmax(0, 1fr); gap: 4px; padding-top: 3px; border-bottom: 1px solid #e3e3e3; }
    .tree { background: #fff; border: 1px solid #e3e3e3; border-top: 3px solid #a0a0a0; border-left: 3px solid #a0a0a0; padding-left: 1px; }
    .root, .leaf { display: flex; align-items: center; height: 20px; }
    .root { padding-left: 1px; gap: 2px; }
    .root span { background: #f0f0f0; padding: 2px 2px; }
    .tree ul { list-style: none; margin: 0 0 0 8px; padding: 0; position: relative; }
    .tree ul::before { content: ""; position: absolute; left: 0; top: 0; bottom: 9px; border-left: 1px dotted #808080; }
    .leaf::before { content: ""; width: 11px; border-top: 1px dotted #808080; }
    .leaf .ico { margin-right: 5px; }
    .right { display: flex; flex-direction: column; min-width: 0; min-height: 0; border-left: 1px solid #a0a0a0; padding-bottom: 5px; margin-right: 3px; }
    .pane { border: solid; border-width: 2px 1px 1px 3px; border-color: #696969 #e3e3e3 #e3e3e3 #808080; flex: none; display: flex; }
    .pane report-list { flex: 1; }
    .upper { border-top: 5px double #696969; height: 156px; margin-bottom: 4px; }
    .lower { flex: 1; min-height: 0; }
    .sub { display: flex; padding-top: 4px; flex: none; }
    .sub .tab { width: 197px; height: 21px; border-top-color: transparent; box-shadow: inset -2px -1px #a0a0a0; }
    .sub .name { text-align: left; padding-left: 13px; }
    .sub .rest { border-top: 2px solid #000; }
    .bottom { padding: 4px 0 5px 1px; border-top: 1px solid #fff; height: 31px; }
    .bottom .rest { border-top: 1px solid #000; }
    .bottom .on { border-color: transparent #000 transparent transparent; box-shadow: inset -2px 0 #a0a0a0; }
    .status { flex: none; height: 20px; padding: 0 2px; border-top: 1px solid #fff; line-height: 21px; }
    poison-dialog { position: absolute; top: 342px; left: 50%; margin-left: -316px; }
  `];

  private tool(t: string[]) {
    return t.length ? html`<button class="tool" aria-label=${t[1]}>${icon(t[0])}</button>` : html`<span class="sep"></span>`;
  }

  private tab(t: Tab, on: boolean) {
    return html`<button class=${classMap({ tab: true, on })} style="width:${t.width}px">${icon(t.icon)}<span class="name">${t.label}</span></button>`;
  }

  render() {
    return html`
      <div class="window">
        <div class="title">
          <button aria-label="最小化"><svg class="ico" width="10" height="12" viewBox="0 0 10 12"><path d="M0 6h10v1H0z" fill="#909090"/></svg></button>
          <button aria-label="还原"><svg class="ico" width="10" height="12" viewBox="0 0 10 12"><path d="M.5 3.500h7v7h-7zM2.500 3.500v-2h7v7h-2" fill="none" stroke="#909090"/></svg></button>
          <button aria-label="关闭"><svg class="ico smooth" width="10" height="12" viewBox="0 0 10 12"><path d="M0 1l10 10M10 1L0 11" stroke="#909090"/></svg></button>
        </div>
        <nav class="menu"><span class="badge"></span>
          ${["文件(F)", "查看(V)", "配置(O)", "工具(T)", "帮助(H)"].map((m) => html`<button>${m}</button>`)}
        </nav>
        <div class="tools">
          <div class="group">${toolsA.map(this.tool)}</div>
          <div class="group">${toolsB.map(this.tool)}</div>
        </div>
        <nav class="tabs top">${topTabs.map((t, i) => this.tab(t, i === 2))}<span class="rest"></span></nav>
        <div class="main">
          <div class="tree">
            <div class="root">${icon("apr")}<span>APR</span></div>
            <ul>${tree.map(([i, t]) => html`<li class="leaf">${icon(i)}${t}</li>`)}</ul>
          </div>
          <div class="right">
            <div class="pane upper"><report-list .columns=${columns} .rows=${routes} .blank=${7}></report-list></div>
            <div class="pane lower"><report-list .columns=${columns} .blank=${80}></report-list></div>
            <div class="sub"><button class="tab">${icon("apr")}<span class="name">配置 / 路由数据包</span></button><span class="rest"></span></div>
          </div>
        </div>
        <nav class="tabs bottom">${bottomTabs.map((t, i) => this.tab(t, i === 1))}<span class="rest"></span></nav>
        <footer class="status">http://www.oxid.it</footer>
        <poison-dialog role="dialog" aria-label="新的 ARP Poison Routing"></poison-dialog>
      </div>
      <task-bar></task-bar>`;
  }
}
